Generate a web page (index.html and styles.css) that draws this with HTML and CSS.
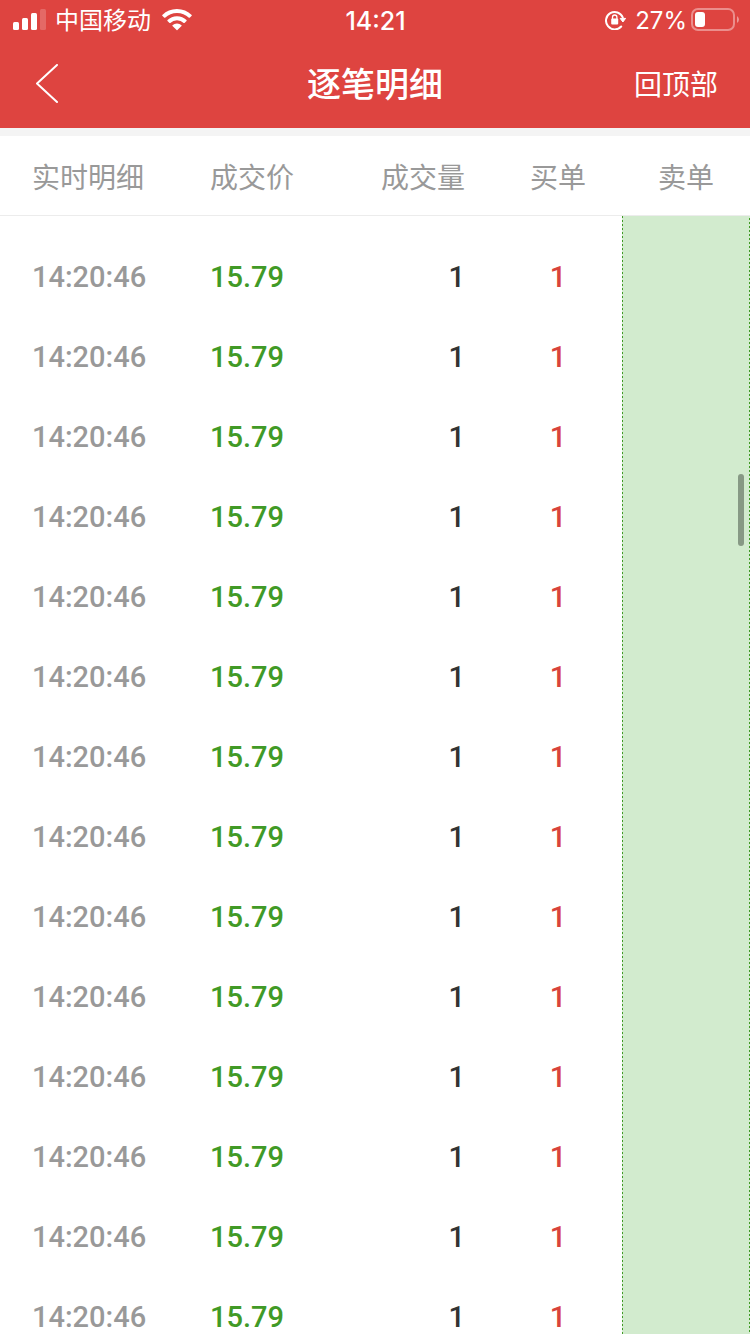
FILE: index.html
```
<!DOCTYPE html>
<html lang="zh-CN">
<head>
<meta charset="utf-8">
<meta name="viewport" content="width=device-width, initial-scale=1">
<title>逐笔明细</title>
<link rel="stylesheet" href="styles.css">
</head>
<body>
<div class="app">
  <header class="top">
    <div class="status">
      <div class="status-left">
        <svg class="signal" width="34" height="22" viewBox="0 0 34 22" fill="#fff" aria-hidden="true">
          <rect x="1" y="13" width="6" height="8" rx="1.5"/>
          <rect x="10" y="9" width="6" height="12" rx="1.5"/>
          <rect x="19" y="4" width="6" height="17" rx="1.5"/>
          <rect x="28" y="0" width="6" height="21" rx="1.5" opacity=".2"/>
        </svg>
        <span class="label">中国移动</span>
        <svg class="wifi" width="30" height="22" viewBox="0 0 30 22" fill="#fff" aria-hidden="true">
          <path d="M15 0C20.700 0 25.900 2.200 29.700 5.900Q30 6.300 29.700 6.700L27.700 8.700Q27.300 9 26.900 8.700A17.200 17.200 0 0 0 3.100 8.700Q2.700 9 2.300 8.700L.3 6.700Q0 6.300.3 5.900A21 21 0 0 1 15 0Z"/>
          <path d="M15 7.300C18.700 7.300 22 8.700 24.500 11.100Q24.900 11.500 24.500 11.900L22.500 13.900Q22.100 14.200 21.700 13.900A9.800 9.800 0 0 0 8.300 13.900Q7.900 14.200 7.500 13.900L5.500 11.900Q5.100 11.500 5.500 11.100A13.600 13.600 0 0 1 15 7.300Z"/>
          <path d="M15 14.500Q17.700 14.500 19.500 16.200Q19.900 16.600 19.500 17L15.400 21.100Q15 21.500 14.600 21.100L10.500 17Q10.100 16.600 10.500 16.200Q12.300 14.500 15 14.500Z"/>
        </svg>
      </div>
      <time class="clock label">14:21</time>
      <div class="status-right">
        <svg class="lock" width="22" height="20" viewBox="0 0 22 20" aria-hidden="true">
          <path d="M16.200 16.500A8.700 8.700 0 1 1 17.800 7.500" fill="none" stroke="#fff" stroke-width="2" stroke-linecap="round"/>
          <path d="M15.200 8.400H20.600L17.900 12Z" fill="#fff" stroke="#fff" stroke-linejoin="round"/>
          <rect x="6.200" y="8.600" width="7" height="5.800" rx="1" fill="#fff"/>
          <path d="M7.500 9V7.200A2.200 2.200 0 0 1 11.900 7.200V9" fill="none" stroke="#fff" stroke-width="1.300"/>
        </svg>
        <span class="label">27%</span>
        <svg class="battery" width="48" height="24" viewBox="0 0 48 24" aria-hidden="true">
          <rect x="1" y="1" width="42" height="21" rx="6" fill="none" stroke="#fff" stroke-width="2" opacity=".4"/>
          <rect x="4" y="4" width="10" height="15" rx="3" fill="#fff"/>
          <path d="M46 8Q48 9.500 48 11.500T46 15Z" fill="#fff" opacity=".45"/>
        </svg>
      </div>
    </div>
    <nav class="nav">
      <button class="back" type="button" aria-label="返回">
        <svg width="24" height="40" viewBox="0 0 24 40" fill="none" stroke="#fff" stroke-width="2" stroke-linecap="round" stroke-linejoin="round" aria-hidden="true"><path d="M21 1L1 19.500L21 38"/></svg>
      </button>
      <h1 class="title">逐笔明细</h1>
      <button class="to-top" type="button">回顶部</button>
    </nav>
  </header>
  <main class="list">
    <table class="ticks">
      <colgroup><col class="c-time"><col class="c-price"><col><col class="c-order"><col class="c-order"></colgroup>
      <thead>
        <tr><th class="time">实时明细</th><th class="price">成交价</th><th class="volume">成交量</th><th class="buy">买单</th><th>卖单</th></tr>
      </thead>
      <tbody>
        <tr class="lead"><td colspan="4"></td><td class="sell"></td></tr>
        <tr><td class="time">14:20:46</td><td class="price">15.79</td><td class="volume">1</td><td class="buy">1</td><td class="sell"></td></tr>
        <tr><td class="time">14:20:46</td><td class="price">15.79</td><td class="volume">1</td><td class="buy">1</td><td class="sell"></td></tr>
        <tr><td class="time">14:20:46</td><td class="price">15.79</td><td class="volume">1</td><td class="buy">1</td><td class="sell"></td></tr>
        <tr><td class="time">14:20:46</td><td class="price">15.79</td><td class="volume">1</td><td class="buy">1</td><td class="sell"></td></tr>
        <tr><td class="time">14:20:46</td><td class="price">15.79</td><td class="volume">1</td><td class="buy">1</td><td class="sell"></td></tr>
        <tr><td class="time">14:20:46</td><td class="price">15.79</td><td class="volume">1</td><td class="buy">1</td><td class="sell"></td></tr>
        <tr><td class="time">14:20:46</td><td class="price">15.79</td><td class="volume">1</td><td class="buy">1</td><td class="sell"></td></tr>
        <tr><td class="time">14:20:46</td><td class="price">15.79</td><td class="volume">1</td><td class="buy">1</td><td class="sell"></td></tr>
        <tr><td class="time">14:20:46</td><td class="price">15.79</td><td class="volume">1</td><td class="buy">1</td><td class="sell"></td></tr>
        <tr><td class="time">14:20:46</td><td class="price">15.79</td><td class="volume">1</td><td class="buy">1</td><td class="sell"></td></tr>
        <tr><td class="time">14:20:46</td><td class="price">15.79</td><td class="volume">1</td><td class="buy">1</td><td class="sell"></td></tr>
        <tr><td class="time">14:20:46</td><td class="price">15.79</td><td class="volume">1</td><td class="buy">1</td><td class="sell"></td></tr>
        <tr><td class="time">14:20:46</td><td class="price">15.79</td><td class="volume">1</td><td class="buy">1</td><td class="sell"></td></tr>
        <tr><td class="time">14:20:46</td><td class="price">15.79</td><td class="volume">1</td><td class="buy">1</td><td class="sell"></td></tr>
      </tbody>
    </table>
    <div class="scroll-thumb"></div>
  </main>
</div>
</body>
</html>
```

FILE: styles.css
```
* { box-sizing: border-box; }

body {
  margin: 0;
  background: #fff;
  font-family: Inter, "Noto Sans CJK SC", sans-serif;
}

.app {
  display: flex;
  flex-direction: column;
  height: 100vh;
  overflow: hidden;
}

.top {
  flex: none;
  background: #de4440;
  color: #fff;
}

.status {
  display: grid;
  grid-template-columns: 1fr auto 1fr;
  align-items: center;
  height: 40px;
  padding: 0 11px 0 12px;
  font-size: 24px;
  line-height: 32px;
}

.status-left,
.status-right {
  display: flex;
  align-items: center;
}

.label { padding-top: 2px; }
.status-left { gap: 9px; }
.status-left .wifi { margin-left: 2px; }
.status-right { justify-content: flex-end; gap: 4px; }
.status-right .lock { margin-right: 4px; }
.clock { font-size: 25px; font-weight: 500; }

.nav {
  display: grid;
  grid-template-columns: 1fr auto 1fr;
  align-items: center;
  height: 88px;
  padding: 0 32px;
}

.back,
.to-top {
  border: 0;
  padding: 0;
  background: none;
  color: inherit;
  font: 400 28px/40px Inter, "Noto Sans CJK SC", sans-serif;
}

.back {
  justify-self: start;
  display: flex;
  padding: 0 4px;
}

.to-top {
  justify-self: end;
  padding-top: 2px;
}

.title {
  margin: 0;
  padding-top: 2px;
  font-size: 34px;
  line-height: 48px;
  font-weight: 500;
}

.list {
  position: relative;
  flex: 1;
  min-height: 0;
  overflow: hidden;
  border-top: 8px solid #f4f4f4;
}

.ticks {
  width: 100%;
  table-layout: fixed;
  border-collapse: separate;
  border-spacing: 0;
}

.c-time { width: 28%; }
.c-price { width: 16%; }
.c-order { width: 128px; }

.ticks th {
  height: 80px;
  padding: 4px 0 0;
  border-bottom: 1px solid #ececec;
  color: #999;
  font-size: 28px;
  font-weight: 400;
  line-height: 40px;
}

.ticks td {
  height: 80px;
  padding: 2px 0 0;
  font: 500 29px/32px Roboto, sans-serif;
}

.ticks .lead td { height: 20px; }

.ticks .time { padding-left: 32px; text-align: left; }
.ticks .price { text-align: left; }
.ticks .volume { padding-right: 29px; text-align: right; }
.ticks .buy { text-align: center; }

td.time { color: #999; }
td.price { color: #419a26; }
td.volume { color: #333; }
td.buy { color: #d9433c; }

td.sell {
  background:
    repeating-linear-gradient(#419a26 0 2px, transparent 2px 4px) left / 1px 100% no-repeat,
    repeating-linear-gradient(transparent 0 2px, #419a26 2px 4px) right / 1px 100% no-repeat,
    #d2ebce;
}

.scroll-thumb {
  position: absolute;
  top: 338px;
  right: 6px;
  width: 6px;
  height: 72px;
  border-radius: 3px;
  background: #879985;
}
```
